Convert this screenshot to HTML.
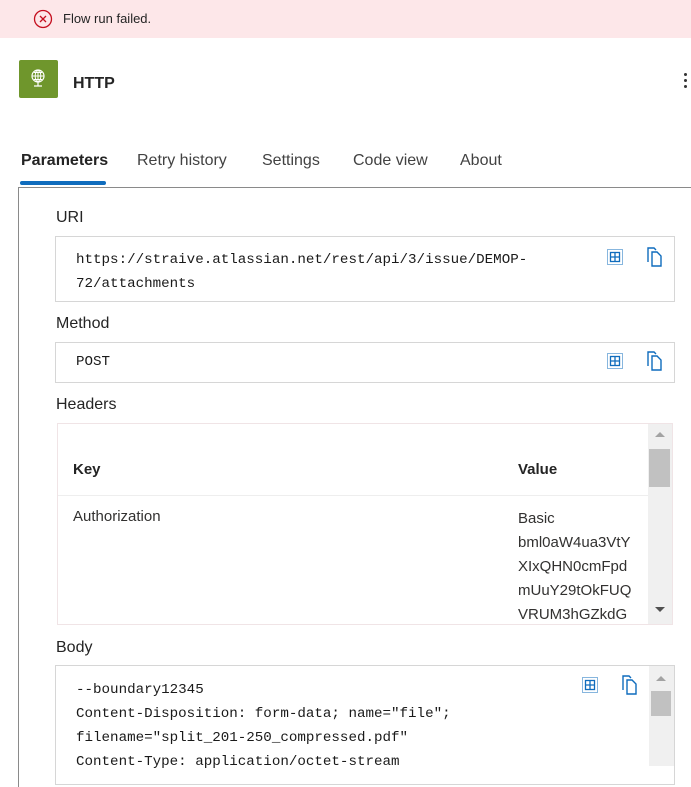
<!DOCTYPE html>
<html><head><meta charset="utf-8"><style>
*{margin:0;padding:0;box-sizing:border-box}
body{width:691px;height:764px;overflow:hidden;background:#fff;font-family:"Liberation Sans",sans-serif;color:#242424;position:relative}
.a{position:absolute;white-space:nowrap}
.mono{font-family:"Liberation Mono",monospace;font-size:14.2px;color:#1a1a1a}
.lbl{font-size:16px;color:#242424}
.box{position:absolute;border:1px solid #d6d6d6;background:#fff}
.ic{position:absolute}
</style></head><body>
<div class="a" style="left:0;top:0;width:691px;height:38px;background:#fde7e9"></div>
<svg class="ic" style="left:33px;top:9px" width="20" height="20" viewBox="0 0 20 20"><circle cx="10" cy="10" r="8.5" fill="none" stroke="#c50f1f" stroke-width="1.3"/><path d="M7 7L13 13M13 7L7 13" stroke="#c50f1f" stroke-width="1.3"/></svg>
<div class="a" style="left:63px;top:11px;font-size:13px;color:#242424">Flow run failed.</div>

<div class="a" style="left:19px;top:60px;width:39px;height:38px;background:#6f962c;border-radius:2px"></div>
<svg class="ic" style="left:28px;top:67px" width="20" height="24" viewBox="0 0 20 24"><circle cx="10" cy="9" r="6" fill="none" stroke="#fff" stroke-width="1.2"/><path d="M4 9H16M10 3V15M6 5.5H14M6 12.5H14" stroke="#fff" stroke-width="1"/><ellipse cx="10" cy="9" rx="2.8" ry="6" fill="none" stroke="#fff" stroke-width="1"/><path d="M10 15V19M6 19H14" stroke="#fff" stroke-width="1.2"/></svg>
<div class="a" style="left:73px;top:75px;font-size:16px;font-weight:bold;color:#242424">HTTP</div>
<div class="a" style="left:684px;top:73px;width:3px;height:3px;background:#333;border-radius:50%"></div>
<div class="a" style="left:684px;top:79px;width:3px;height:3px;background:#333;border-radius:50%"></div>
<div class="a" style="left:684px;top:85px;width:3px;height:3px;background:#333;border-radius:50%"></div>

<div class="a" style="left:21px;top:152px;font-size:16px;font-weight:bold">Parameters</div>
<div class="a" style="left:137px;top:152px;font-size:16px;color:#424242">Retry history</div>
<div class="a" style="left:262px;top:152px;font-size:16px;color:#424242">Settings</div>
<div class="a" style="left:353px;top:152px;font-size:16px;color:#424242">Code view</div>
<div class="a" style="left:460px;top:152px;font-size:16px;color:#424242">About</div>
<div class="a" style="left:20px;top:181px;width:86px;height:4px;background:#0f6cbd;border-radius:2px"></div>
<div class="a" style="left:18px;top:187px;width:700px;height:600px;border-left:1px solid #8a8a8a;border-top:1px solid #8a8a8a"></div>

<div class="a lbl" style="left:56px;top:209px">URI</div>
<div class="box" style="left:55px;top:236px;width:620px;height:66px"></div>
<div class="a mono" style="left:76px;top:248px;line-height:24px">https://straive.atlassian.net/rest/api/3/issue/DEMOP-<br>72/attachments</div>

<div class="a lbl" style="left:56px;top:315px">Method</div>
<div class="box" style="left:55px;top:342px;width:620px;height:41px"></div>
<div class="a mono" style="left:76px;top:354px">POST</div>

<div class="a lbl" style="left:56px;top:396px">Headers</div>
<div class="box" style="left:57px;top:423px;width:616px;height:202px;border-color:#f0e4e6"></div>
<div class="a" style="left:648px;top:424px;width:24px;height:200px;background:#f0f0f0"></div>
<div class="a" style="left:649px;top:449px;width:21px;height:38px;background:#c1c1c1"></div>
<div class="a" style="left:655px;top:432px;width:0;height:0;border:5px solid transparent;border-bottom-color:#a3a3a3;border-top:none"></div>
<div class="a" style="left:655px;top:607px;width:0;height:0;border:5px solid transparent;border-top-color:#505050;border-bottom:none"></div>
<div class="a" style="left:73px;top:461px;font-size:15px;font-weight:bold">Key</div>
<div class="a" style="left:518px;top:461px;font-size:15px;font-weight:bold">Value</div>
<div class="a" style="left:58px;top:495px;width:590px;height:1px;background:#eee"></div>
<div class="a" style="left:73px;top:508px;font-size:15px;color:#323130">Authorization</div>
<div class="a" style="left:518px;top:507px;font-size:15px;line-height:24px;color:#323130;height:116px;overflow:hidden">Basic<br>bml0aW4ua3VtY<br>XIxQHN0cmFpd<br>mUuY29tOkFUQ<br>VRUM3hGZkdG</div>

<div class="a lbl" style="left:56px;top:639px">Body</div>
<div class="box" style="left:55px;top:665px;width:620px;height:120px"></div>
<div class="a" style="left:649px;top:666px;width:25px;height:100px;background:#f0f0f0"></div>
<div class="a" style="left:651px;top:691px;width:20px;height:25px;background:#c1c1c1"></div>
<div class="a" style="left:656px;top:676px;width:0;height:0;border:5px solid transparent;border-bottom-color:#a3a3a3;border-top:none"></div>
<div class="a mono" style="left:76px;top:678px;line-height:24px">--boundary12345<br>Content-Disposition: form-data; name="file";<br>filename="split_201-250_compressed.pdf"<br>Content-Type: application/octet-stream</div>

<svg class="ic" style="left:606px;top:248px" width="18" height="18" viewBox="0 0 18 18"><rect x="1.5" y="1.5" width="15" height="15" fill="none" stroke="#0f6cbd" stroke-dasharray="1 1"/><rect x="4.5" y="4.5" width="9" height="9" fill="none" stroke="#0f6cbd" stroke-width="1.3"/><path d="M9 4.5V13.5M4.5 9H13.5" stroke="#0f6cbd" stroke-width="1.3"/></svg>
<svg class="ic" style="left:644px;top:246px" width="20" height="22" viewBox="0 0 20 22"><path d="M4 16V2H10L12 4" fill="none" stroke="#0f6cbd" stroke-width="1.4"/><path d="M8 6H13L17 10V20H8Z" fill="none" stroke="#0f6cbd" stroke-width="1.4"/></svg>
<svg class="ic" style="left:606px;top:352px" width="18" height="18" viewBox="0 0 18 18"><rect x="1.5" y="1.5" width="15" height="15" fill="none" stroke="#0f6cbd" stroke-dasharray="1 1"/><rect x="4.5" y="4.5" width="9" height="9" fill="none" stroke="#0f6cbd" stroke-width="1.3"/><path d="M9 4.5V13.5M4.5 9H13.5" stroke="#0f6cbd" stroke-width="1.3"/></svg>
<svg class="ic" style="left:644px;top:350px" width="20" height="22" viewBox="0 0 20 22"><path d="M4 16V2H10L12 4" fill="none" stroke="#0f6cbd" stroke-width="1.4"/><path d="M8 6H13L17 10V20H8Z" fill="none" stroke="#0f6cbd" stroke-width="1.4"/></svg>
<svg class="ic" style="left:581px;top:676px" width="18" height="18" viewBox="0 0 18 18"><rect x="1.5" y="1.5" width="15" height="15" fill="none" stroke="#0f6cbd" stroke-dasharray="1 1"/><rect x="4.5" y="4.5" width="9" height="9" fill="none" stroke="#0f6cbd" stroke-width="1.3"/><path d="M9 4.5V13.5M4.5 9H13.5" stroke="#0f6cbd" stroke-width="1.3"/></svg>
<svg class="ic" style="left:619px;top:674px" width="20" height="22" viewBox="0 0 20 22"><path d="M4 16V2H10L12 4" fill="none" stroke="#0f6cbd" stroke-width="1.4"/><path d="M8 6H13L17 10V20H8Z" fill="none" stroke="#0f6cbd" stroke-width="1.4"/></svg>
</body></html>
